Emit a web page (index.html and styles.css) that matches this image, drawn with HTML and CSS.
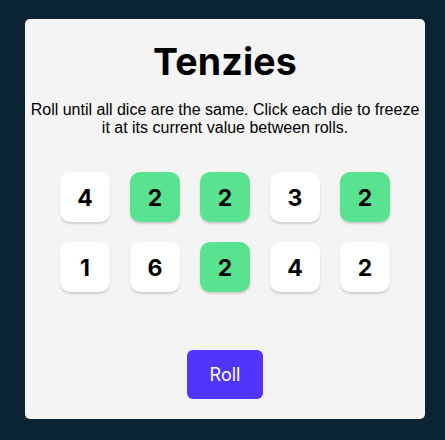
FILE: index.html
```html
<!DOCTYPE html>
<html>
<head>
<meta charset="utf-8">
<link rel="stylesheet" href="styles.css">
</head>
<body>
<div class="page">
  <main class="card">
    <h1 class="title">Tenzies</h1>
    <p class="instructions">Roll until all dice are the same. Click each die to freeze it at its current value between rolls.</p>
    <div class="dice">
      <button class="die">4</button>
      <button class="die held">2</button>
      <button class="die held">2</button>
      <button class="die">3</button>
      <button class="die held">2</button>
      <button class="die">1</button>
      <button class="die">6</button>
      <button class="die held">2</button>
      <button class="die">4</button>
      <button class="die">2</button>
    </div>
    <button class="roll">Roll</button>
  </main>
</div>
</body>
</html>
```
FILE: styles.css
```css
html, body {
  margin: 0;
  padding: 0;
  background: #0B2434;
}
.page {
  padding: 19px 20px 21px 25px;
}
.card {
  width: 400px;
  height: 400px;
  box-sizing: border-box;
  background: #F4F4F4;
  border-radius: 5px;
  display: flex;
  flex-direction: column;
  align-items: center;
  padding-top: 20px;
}
.title {
  font-family: Inter, "Noto Sans", sans-serif;
  font-weight: 700;
  font-size: 37.5px;
  line-height: 45px;
  letter-spacing: 0.2px;
  margin: 0;
  color: #000;
}
.instructions {
  font-family: "Liberation Sans", Arial, sans-serif;
  font-size: 16px;
  line-height: 18.4px;
  text-align: center;
  margin: 17px 0 0;
  padding: 0;
  color: #000;
}
.dice {
  display: grid;
  grid-template-columns: repeat(5, 50px);
  gap: 20px;
  margin-top: 34px;
}
.die {
  width: 50px;
  height: 50px;
  border: none;
  border-radius: 10px;
  background: #FFFFFF;
  box-shadow: 0 2px 2px rgba(0, 0, 0, 0.15);
  font-family: Inter, "Noto Sans", sans-serif;
  font-weight: 700;
  font-size: 23px;
  color: #000;
  padding: 2px 0 0;
}
.die.held {
  background: #59E391;
}
.roll {
  margin-top: 58px;
  width: 76px;
  height: 49px;
  border: none;
  border-radius: 6px;
  background: #5035FF;
  color: #fff;
  font-family: Inter, "Noto Sans", sans-serif;
  font-size: 18px;
  font-weight: 400;
  padding: 0;
}
```
